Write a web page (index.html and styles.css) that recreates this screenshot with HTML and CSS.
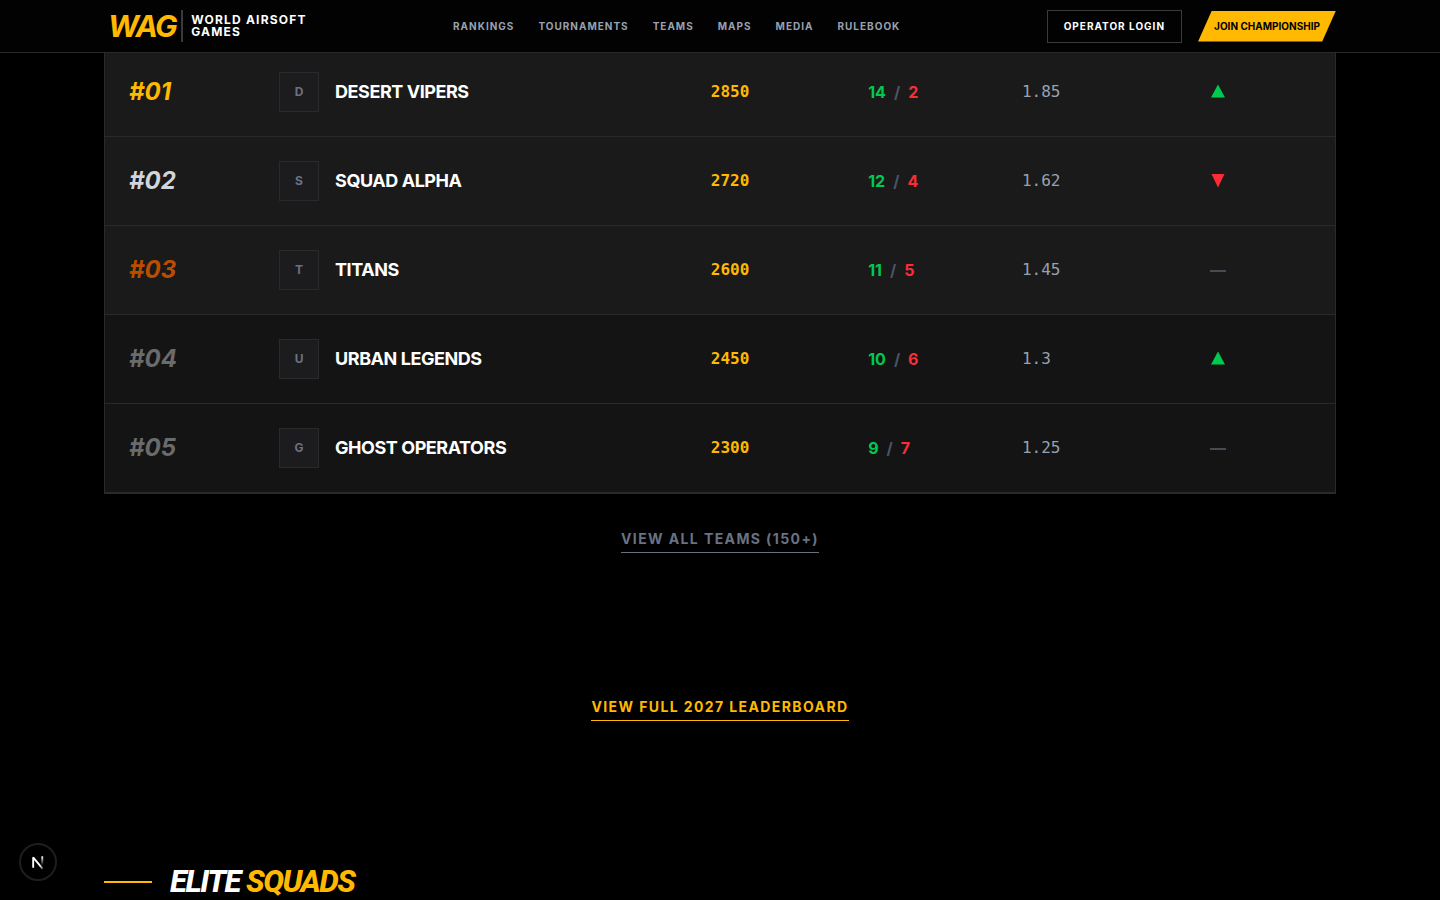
FILE: index.html
```html
<!DOCTYPE html>
<html lang="en">
<head>
<meta charset="utf-8">
<meta name="viewport" content="width=device-width, initial-scale=1">
<title>World Airsoft Games</title>
<link rel="stylesheet" href="styles.css">
</head>
<body>
<header class="topbar">
  <div class="container topbar-inner">
    <a class="brand" href="#">
      <span class="brand-mark">WAG</span>
      <span class="brand-name">World Airsoft<br>Games</span>
    </a>
    <nav class="nav">
      <a href="#">Rankings</a>
      <a href="#">Tournaments</a>
      <a href="#">Teams</a>
      <a href="#">Maps</a>
      <a href="#">Media</a>
      <a href="#">Rulebook</a>
    </nav>
    <div class="actions">
      <button class="btn-login" type="button">Operator Login</button>
      <button class="btn-join" type="button">Join Championship</button>
    </div>
  </div>
</header>
<main class="container main">
  <section class="board">
    <table class="table">
      <colgroup>
        <col class="col-rank"><col class="col-team"><col class="col-points"><col class="col-record"><col class="col-ratio"><col class="col-trend">
      </colgroup>
      <tbody>
        <tr class="top">
          <td class="rank gold">#01</td>
          <td><div class="team"><span class="badge">D</span>Desert Vipers</div></td>
          <td class="points">2850</td>
          <td class="record"><span class="win">14</span><span class="sep">/</span><span class="loss">2</span></td>
          <td class="ratio">1.85</td>
          <td class="trend"><svg class="icon up" viewBox="0 0 16 16"><path d="M8 0.500L15 13.500H1Z"/></svg></td>
        </tr>
        <tr class="top">
          <td class="rank silver">#02</td>
          <td><div class="team"><span class="badge">S</span>Squad Alpha</div></td>
          <td class="points">2720</td>
          <td class="record"><span class="win">12</span><span class="sep">/</span><span class="loss">4</span></td>
          <td class="ratio">1.62</td>
          <td class="trend"><svg class="icon down" viewBox="0 0 16 16"><path d="M1.500 1H14.500L8 14.500Z"/></svg></td>
        </tr>
        <tr class="top">
          <td class="rank bronze">#03</td>
          <td><div class="team"><span class="badge">T</span>Titans</div></td>
          <td class="points">2600</td>
          <td class="record"><span class="win">11</span><span class="sep">/</span><span class="loss">5</span></td>
          <td class="ratio">1.45</td>
          <td class="trend"><svg class="icon flat" viewBox="0 0 16 16"><path d="M0 8H16V10H0Z"/></svg></td>
        </tr>
        <tr>
          <td class="rank">#04</td>
          <td><div class="team"><span class="badge">U</span>Urban Legends</div></td>
          <td class="points">2450</td>
          <td class="record"><span class="win">10</span><span class="sep">/</span><span class="loss">6</span></td>
          <td class="ratio">1.3</td>
          <td class="trend"><svg class="icon up" viewBox="0 0 16 16"><path d="M8 0.500L15 13.500H1Z"/></svg></td>
        </tr>
        <tr>
          <td class="rank">#05</td>
          <td><div class="team"><span class="badge">G</span>Ghost Operators</div></td>
          <td class="points">2300</td>
          <td class="record"><span class="win">9</span><span class="sep">/</span><span class="loss">7</span></td>
          <td class="ratio">1.25</td>
          <td class="trend"><svg class="icon flat" viewBox="0 0 16 16"><path d="M0 8H16V10H0Z"/></svg></td>
        </tr>
      </tbody>
    </table>
  </section>
  <div class="more"><a class="more-link" href="#">View All Teams (150+)</a></div>
  <div class="more full"><a class="more-link accent" href="#">View Full 2027 Leaderboard</a></div>
  <div class="heading">
    <span class="rule"></span>
    <h2>Elite <span class="accent">Squads</span></h2>
  </div>
</main>
<button class="dev" type="button" aria-label="Developer tools">
  <svg class="dev-icon" viewBox="0 0 36 36">
    <defs>
      <linearGradient id="stem" x1="0" y1="0" x2="0" y2="1"><stop offset="0" stop-color="#fff"/><stop offset="1" stop-color="#fff" stop-opacity="0"/></linearGradient>
      <linearGradient id="diag" x1="0" y1="0" x2="1" y2="1"><stop offset="0.700" stop-color="#fff"/><stop offset="1" stop-color="#fff" stop-opacity="0.300"/></linearGradient>
    </defs>
    <path d="M12.900 24V13L23 25.300" fill="none" stroke="url(#diag)" stroke-width="2" stroke-linejoin="bevel"/>
    <path d="M21.500 12H23.500V21.500H21.500Z" fill="url(#stem)"/>
  </svg>
</button>
</body>
</html>
```

FILE: styles.css
```css
* { box-sizing: border-box; }
html, body { margin: 0; background: #000; }
body {
  height: 100vh;
  overflow: hidden;
  color: #fff;
  font-family: Inter, "Liberation Sans", sans-serif;
  font-size: 16px;
  line-height: 24px;
}
a { color: inherit; text-decoration: none; }
button { font: inherit; cursor: pointer; }
.container { width: 100%; max-width: 1280px; margin: 0 auto; padding: 0 24px; }

.topbar {
  position: fixed;
  top: 0;
  left: 0;
  right: 0;
  z-index: 10;
  background: #020202;
  border-bottom: 1px solid #2a2a2a;
  text-transform: uppercase;
}
.topbar-inner { display: flex; align-items: center; justify-content: space-between; height: 52px; }
.brand { display: flex; align-items: center; }
.brand-mark {
  padding: 0 5px 0 4px;
  color: #ffb900;
  font-size: 30px;
  line-height: 32px;
  font-weight: 700;
  font-style: italic;
  letter-spacing: -1.500px;
}
.brand-name {
  padding: 4px 0 4px 8px;
  border-left: 2px solid #3a3a3a;
  font-size: 12px;
  line-height: 12px;
  font-weight: 700;
  letter-spacing: 1.200px;
}
.nav { display: flex; gap: 24px; color: #99a1af; font-size: 10px; line-height: 16px; font-weight: 700; letter-spacing: 1px; }
.actions { display: flex; align-items: center; gap: 16px; font-size: 10px; line-height: 15px; font-weight: 700; }
.btn-login {
  padding: 8px 16px;
  border: 1px solid #3a3a3a;
  background: transparent;
  color: #fff;
  letter-spacing: 1px;
  text-transform: uppercase;
}
.btn-join {
  padding: 8px 16px;
  border: 0;
  background: #ffb900;
  color: #000;
  text-transform: uppercase;
  clip-path: polygon(10% 0, 100% 0, 90% 100%, 0 100%);
}

.main { padding-top: 48px; }
.board { border: 1px solid #2a2a2a; border-top: 0; background: #141414; }
.table { width: 100%; table-layout: fixed; border-spacing: 0; }
.col-rank { width: 12.200%; }
.col-team { width: 35.100%; }
.col-points { width: 12.800%; }
.col-record { width: 12.500%; }
.col-ratio { width: 8.400%; }
.table td { padding: 24px; height: 89px; border-bottom: 1px solid #2a2a2a; vertical-align: middle; white-space: nowrap; }
.top { background: #1a1a1a; }
.table .rank { color: #6b6b6b; font-size: 24px; line-height: 32px; font-weight: 700; font-style: italic; }
.table .gold { color: #ffb900; }
.table .silver { color: #d1d5dc; }
.table .bronze { color: #bb4d00; }
.team { display: flex; align-items: center; gap: 16px; font-size: 18px; line-height: 28px; font-weight: 700; letter-spacing: -0.450px; text-transform: uppercase; }
.badge {
  display: flex;
  align-items: center;
  justify-content: center;
  width: 40px;
  height: 40px;
  border: 1px solid #2a2a2d;
  background: #1c1c1f;
  color: #6a7282;
  font-size: 12px;
  letter-spacing: 0;
}
.points, .ratio { font-family: "DejaVu Sans Mono", monospace; }
.points { color: #ffb900; font-weight: 700; }
.ratio { color: #99a1af; }
.record { font-weight: 700; }
.win { color: #00c950; }
.sep { margin: 0 8px; color: #4a5565; }
.loss { color: #fb2c36; }
.table .trend { text-align: center; }
.icon { display: block; width: 16px; height: 16px; margin: 0 auto; }
.up { fill: #00c950; }
.down { fill: #fb2c36; }
.flat { fill: #4a4a55; }

.more { display: flex; justify-content: center; margin-top: 35px; }
.full { margin-top: 144px; }
.more-link {
  padding-bottom: 3px;
  border-bottom: 1px solid;
  color: #6a7282;
  font-size: 14px;
  line-height: 20px;
  font-weight: 700;
  letter-spacing: 1.400px;
  text-transform: uppercase;
}
.more .accent, h2 .accent { color: #ffb900; }
.full + .heading { margin-top: 144px; }
.heading { display: flex; align-items: center; gap: 18px; }
.rule { width: 48px; height: 2px; background: #ffb900; }
h2 { margin: 0; font-family: Roboto, sans-serif; font-size: 31px; line-height: 34px; font-weight: 800; font-style: italic; letter-spacing: -1.500px; text-transform: uppercase; }

.dev {
  position: fixed;
  left: 19px;
  bottom: 19px;
  display: flex;
  padding: 0;
  border: 2px solid #1e1e1e;
  border-radius: 50%;
  background: #000;
}
.dev-icon { width: 34px; height: 34px; }
```
